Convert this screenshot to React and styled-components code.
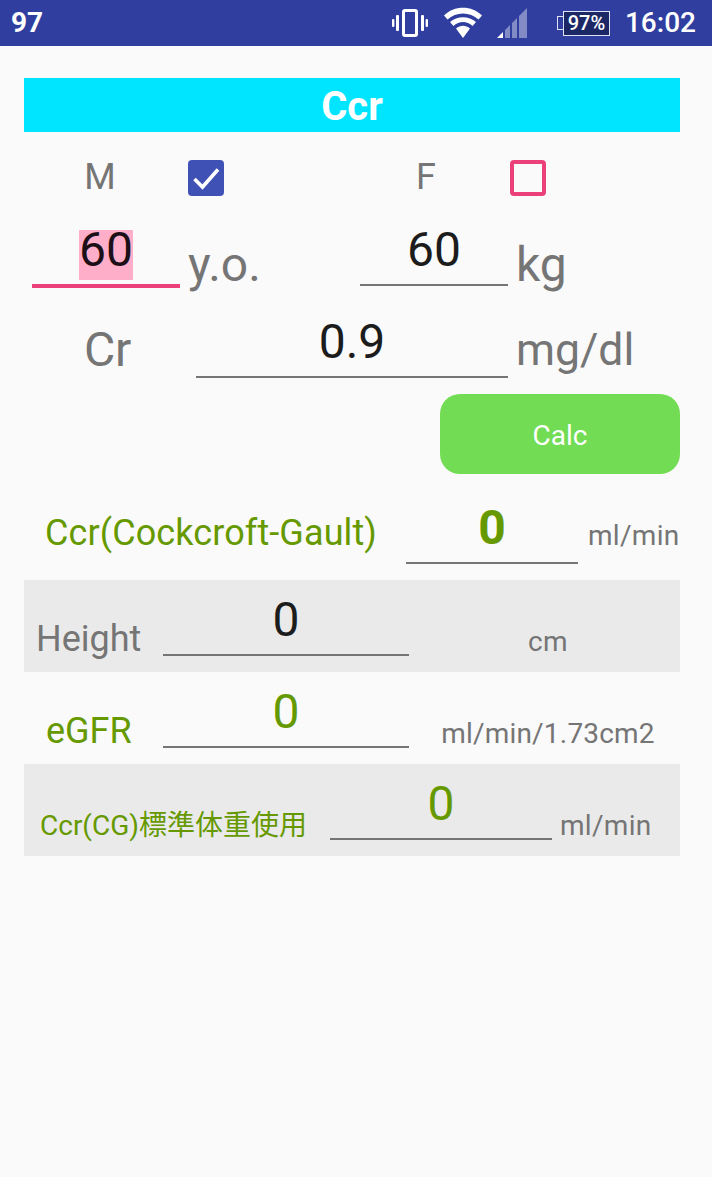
import React from "react";
import styled, { createGlobalStyle } from "styled-components";

const Global = createGlobalStyle`
  html, body { margin: 0; padding: 0; background: #fafafa; }
  body { font-family: Roboto, "Noto Sans CJK JP", sans-serif; }
`;
const Page = styled.div`
  width: 712px; height: 1177px; background: #fafafa; overflow: hidden;
`;
const StatusBar = styled.div`
  height: 46px; background: #303f9f; display: flex; align-items: center; color: #fff;
`;
const Carrier = styled.div`
  font-size: 28px; font-weight: 700; margin-left: 11px; flex: 1; line-height: 46px;
`;
const StatusIcons = styled.div`
  display: flex; align-items: center; height: 46px;
`;
const Clock = styled.div`
  font-size: 28px; font-weight: 500; margin: 0 16px 0 15px; line-height: 46px;
`;
const Content = styled.div`
  padding: 32px 32px 0 24px; width: 656px;
`;
const Title = styled.div`
  height: 54px; background: #00e5ff; color: #fff; font-weight: 700; font-size: 40px;
  line-height: 58px; text-align: center;
`;
const Row = styled.div`
  display: flex; height: ${p => p.$h}px; align-items: flex-start;
  background: ${p => p.$shade ? "#eaeaea" : "transparent"};
`;
const Cell = styled.div`
  width: ${p => p.$w}px; margin-left: ${p => p.$ml || 0}px; margin-top: ${p => p.$mt || 0}px;
  flex: none; text-align: ${p => p.$center ? "center" : "left"};
  font-size: ${p => p.$size}px; line-height: 56px;
  letter-spacing: ${p => p.$ls || 0}px;
  color: ${p => p.$color || "#757575"}; white-space: nowrap;
`;
const Check = styled.div`
  width: 36px; height: 36px; box-sizing: border-box; border-radius: 4px; flex: none;
  margin-left: ${p => p.$ml}px; margin-top: 28px;
  display: flex; align-items: center; justify-content: center;
  background: ${p => p.$on ? "#3f51b5" : "transparent"};
  border: ${p => p.$on ? "none" : "4px solid #ec407a"};
`;
const Field = styled.div`
  width: ${p => p.$w}px; height: ${p => p.$h}px; margin-left: ${p => p.$ml || 0}px;
  padding-top: ${p => p.$pt || 0}px;
  flex: none; box-sizing: border-box; text-align: center;
  border-bottom: ${p => p.$focus ? "4px solid #ec407a" : "2px solid #757575"};
  font-size: 48px; line-height: 56px;
  color: ${p => p.$color || "#1c1c1c"}; font-weight: ${p => p.$bold ? 700 : 400};
`;
const Selected = styled.span`
  display: block; width: 54px; height: 50px; margin: 0 auto; background: #ffaec9;
  line-height: 40px; color: #1c1018;
`;
const CalcButton = styled.button`
  width: 240px; height: 80px; border: none; border-radius: 20px; background: #72dc55;
  color: #fff; font: 400 28px Roboto, sans-serif; margin-left: 416px; padding: 2px 0 0; display: block;
`;
const BatteryBox = styled.div`
  position: relative; width: 47px; height: 25px; margin-left: 36px; box-sizing: border-box;
  border: 1.5px solid #dfe2f2; background: #1c2766; color: #fff;
  font-size: 20px; font-weight: 500; line-height: 22px; text-align: center;
  &::before {
    content: ""; position: absolute; left: -7px; top: 4px; width: 6px; height: 14px;
    border: 1.5px solid #dfe2f2; border-right: none; box-sizing: border-box;
  }
`;

const Vibrate = () => (
  <svg width="36" height="28" viewBox="0 0 36 28" fill="none">
    <rect x="11.5" y="1.5" width="13" height="25" rx="1.5" stroke="#fff" strokeWidth="3" />
    <rect x="4" y="6" width="3" height="16" rx="1" fill="#fff" />
    <rect x="29" y="6" width="3" height="16" rx="1" fill="#fff" />
    <rect x="0" y="10" width="2.4" height="8" rx="1" fill="#fff" />
    <rect x="33.6" y="10" width="2.4" height="8" rx="1" fill="#fff" />
  </svg>
);
const Wifi = () => (
  <svg width="38" height="32" viewBox="0 0 38 32" fill="none" style={{ marginLeft: 16 }}>
    <path d="M0 8.5 C10 -2 28 -2 38 8.5 L34.5 12.5 C26 4.5 12 4.5 3.5 12.5 Z" fill="#fff" />
    <path d="M6 15 C13 8.5 25 8.5 32 15 L28.6 19 C23 13.8 15 13.8 9.4 19 Z" fill="#fff" />
    <path d="M12 21.5 C16.5 17.8 21.5 17.8 26 21.5 L19 31 Z" fill="#fff" />
  </svg>
);
const Signal = () => (
  <svg width="30" height="30" viewBox="0 0 30 30" style={{ marginLeft: 15 }}>
    <path d="M0 30 L6 24 L6 30 Z" fill="#fff" />
    <path d="M8 22 L13 17 L13 30 L8 30 Z M15 15 L20 10 L20 30 L15 30 Z M22 8 L30 0 L30 30 L22 30 Z" fill="#fff" opacity="0.4" />
  </svg>
);

export default function App() {
  return (
    <Page>
      <Global />
      <StatusBar>
        <Carrier>97</Carrier>
        <StatusIcons>
          <Vibrate />
          <Wifi />
          <Signal />
          <BatteryBox>97%</BatteryBox>
          <Clock>16:02</Clock>
        </StatusIcons>
      </StatusBar>
      <Content>
        <Title>Ccr</Title>
        <Row $h={84}>
          <Cell $w={152} $center $size={36} $mt={17}>M</Cell>
          <Check $on $ml={12}>
            <svg width="32" height="32" viewBox="0 0 32 32" fill="none">
              <path d="M4.5 17 L12.5 25 L28 7.5" stroke="#fff" strokeWidth="3.6" />
            </svg>
          </Check>
          <Cell $w={100} $ml={152} $center $size={36} $mt={17}>F</Cell>
          <Check $ml={34} />
        </Row>
        <Row $h={92}>
          <Field $w={148} $ml={8} $h={72} $pt={14} $focus><Selected>60</Selected></Field>
          <Cell $w={150} $ml={8} $size={48} $mt={21}>y.o.</Cell>
          <Field $w={148} $ml={22} $h={70} $pt={6}>60</Field>
          <Cell $w={100} $ml={8} $size={48} $mt={21}>kg</Cell>
        </Row>
        <Row $h={86}>
          <Cell $w={48} $ml={60} $size={48} $mt={14} $ls={-0.3}>Cr</Cell>
          <Field $w={312} $ml={64} $h={70} $pt={6}>0.9</Field>
          <Cell $w={130} $ml={8} $size={44.5} $mt={14}>mg/dl</Cell>
        </Row>
        <CalcButton>Calc</CalcButton>
        <Row $h={106}>
          <Cell $w={341} $ml={21} $size={36} $mt={31} $ls={0.1} $color="#669900">Ccr(Cockcroft-Gault)</Cell>
          <Field $w={172} $ml={20} $h={90} $pt={26} $color="#669900" $bold>0</Field>
          <Cell $w={100} $ml={10} $size={28} $mt={34} $ls={0.3}>ml/min</Cell>
        </Row>
        <Row $h={92} $shade>
          <Cell $w={110} $ml={12} $size={36} $mt={31}>Height</Cell>
          <Field $w={246} $ml={17} $h={76} $pt={12}>0</Field>
          <Cell $w={278} $center $size={28} $mt={34} $ls={0.3}>cm</Cell>
        </Row>
        <Row $h={92}>
          <Cell $w={117} $ml={22} $size={36} $mt={31} $color="#669900">eGFR</Cell>
          <Field $w={246} $h={76} $pt={12} $color="#669900">0</Field>
          <Cell $w={278} $center $size={28} $mt={34} $ls={0.2}>ml/min/1.73cm2</Cell>
        </Row>
        <Row $h={92} $shade>
          <Cell $w={290} $ml={16} $size={28} $mt={34} $color="#669900">Ccr(CG)標準体重使用</Cell>
          <Field $w={222} $h={76} $pt={12} $color="#669900">0</Field>
          <Cell $w={100} $ml={8} $size={28} $mt={34} $ls={0.3}>ml/min</Cell>
        </Row>
      </Content>
    </Page>
  );
}
